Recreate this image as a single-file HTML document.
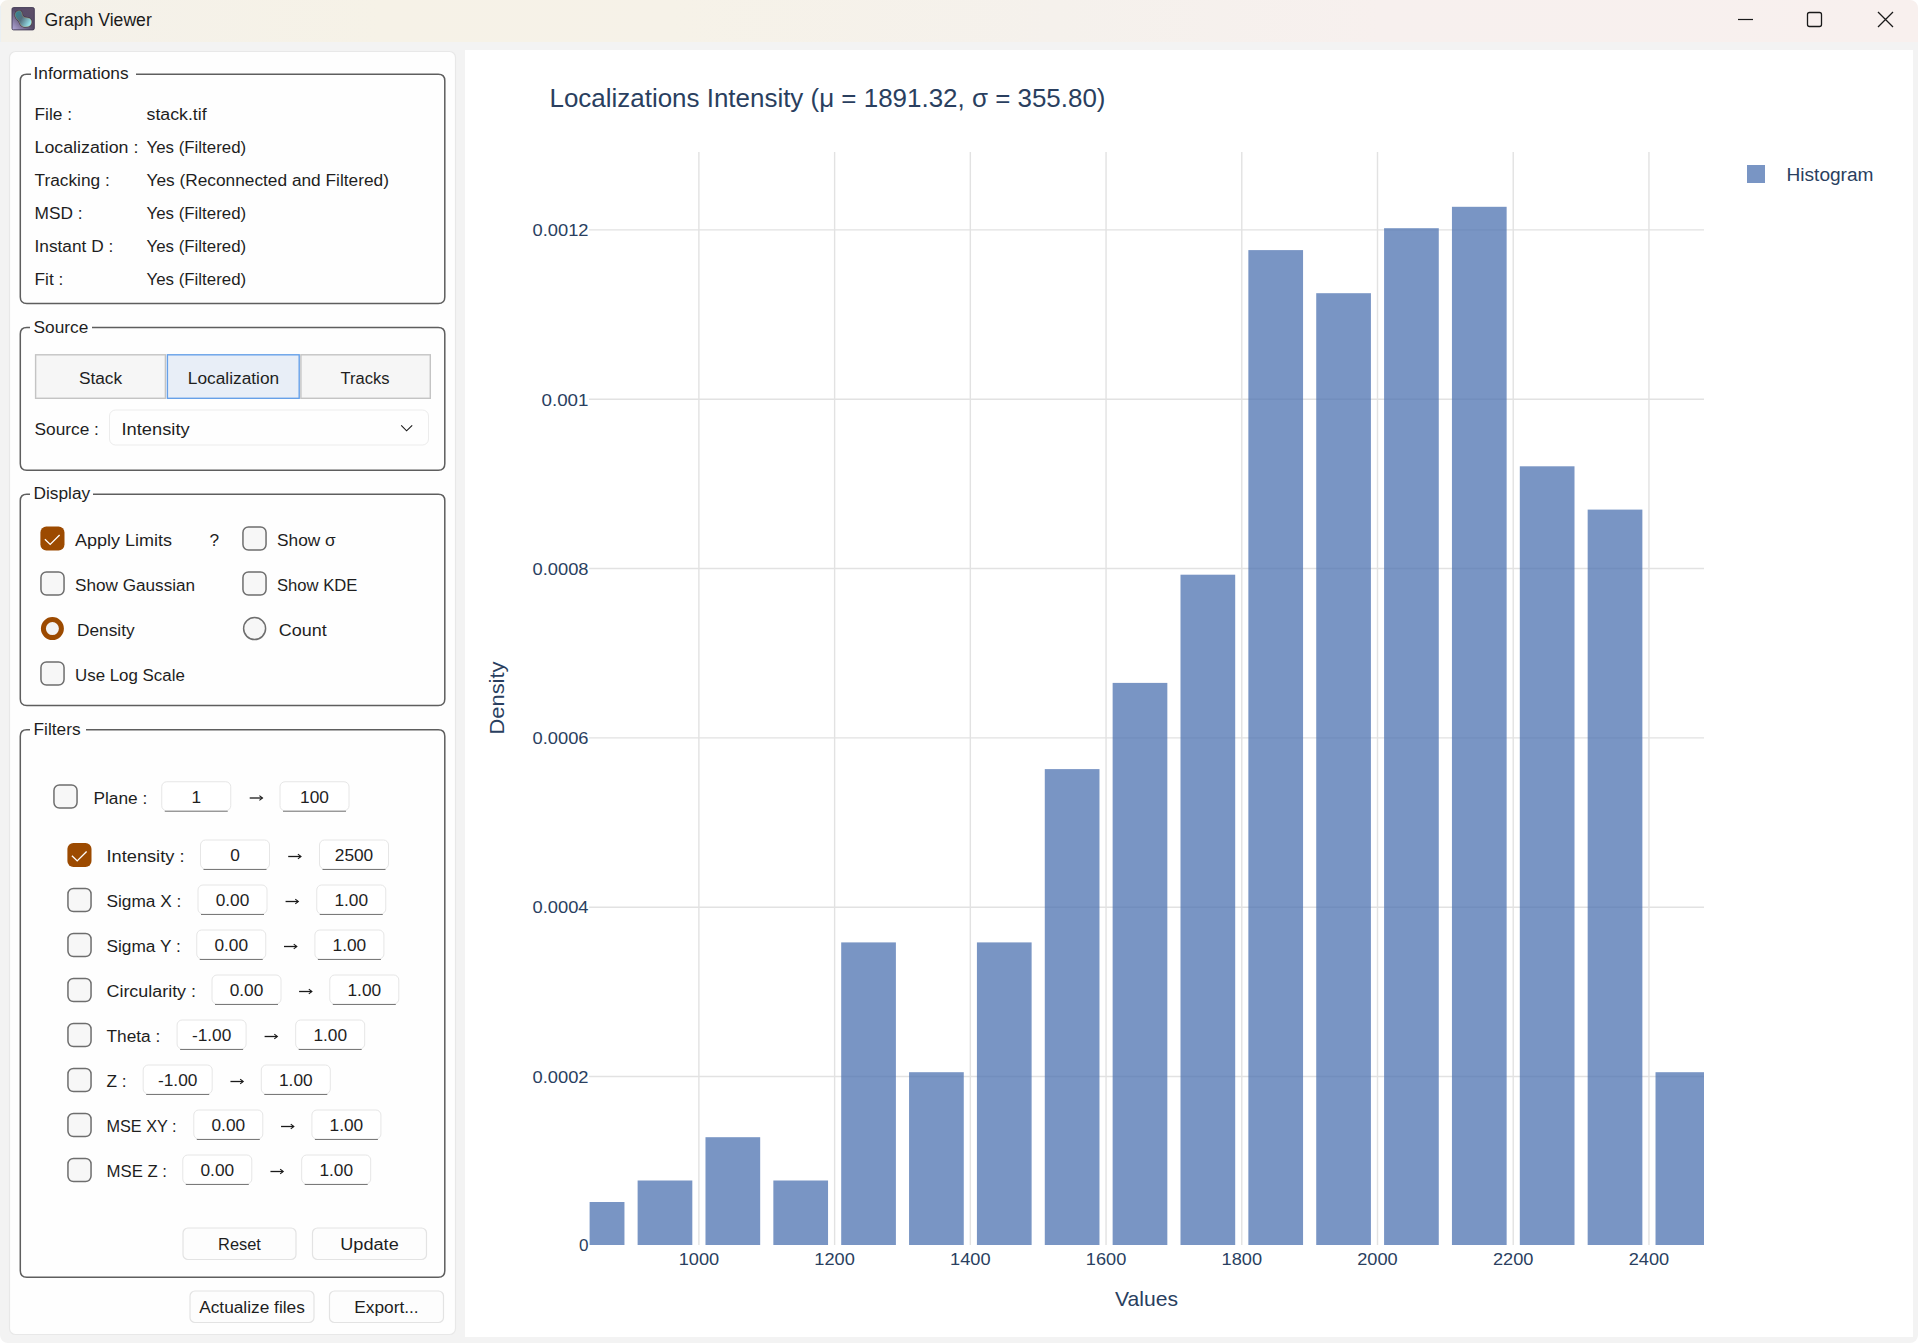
<!DOCTYPE html><html><head><meta charset="utf-8"><style>html,body{margin:0;padding:0;background:#f3f3f3;overflow:hidden}svg{display:block}</style></head><body>
<svg width="1918" height="1343" viewBox="0 0 1918 1343" font-family='"Liberation Sans", sans-serif'>
<defs><linearGradient id="tb" x1="0" x2="1" y1="0" y2="0"><stop offset="0" stop-color="#f4f1ea"/><stop offset="0.2" stop-color="#f6f2e7"/><stop offset="0.35" stop-color="#f6f2e8"/><stop offset="0.55" stop-color="#f5f1ec"/><stop offset="0.72" stop-color="#f7f0ee"/><stop offset="1" stop-color="#f8f0ee"/></linearGradient><linearGradient id="ic" x1="1" y1="0" x2="0" y2="1"><stop offset="0" stop-color="#5e4f68"/><stop offset="0.5" stop-color="#574c6a"/><stop offset="1" stop-color="#b5abdc"/></linearGradient><linearGradient id="ic2" x1="0" y1="0" x2="1" y2="0.6"><stop offset="0" stop-color="#2e8a98"/><stop offset="0.5" stop-color="#55707e"/><stop offset="1" stop-color="#95e0e8"/></linearGradient></defs>
<rect width="1918" height="1343" fill="#f3f3f3"/>
<rect width="1918" height="42" fill="url(#tb)"/>
<rect x="12" y="7.6" width="22.3" height="22.3" rx="1.5" fill="url(#ic)" stroke="#3d3550" stroke-width="0.9"/>
<path d="M19.2,10.7 C21.5,10.5 22,12.5 22.3,14.5 C22.7,16.5 24,17.7 27,17.8 C30.5,17.9 31.8,20 31.6,22.5 C31.3,25.5 29,27 25,27 C21.5,27 20.2,24.5 19.3,22 C18.5,20 16,19 15.2,16 C14.5,13 16.5,10.8 19.2,10.7 Z" fill="url(#ic2)" stroke="#2e2840" stroke-width="1.4"/>
<path d="M19.2,10.7 C21.5,10.5 22,12.5 22.3,14.5 C22.7,16.5 24,17.7 27,17.8 C30.5,17.9 31.8,20 31.6,22.5 C31.3,25.5 29,27 25,27 C21.5,27 20.2,24.5 19.3,22 C18.5,20 16,19 15.2,16 C14.5,13 16.5,10.8 19.2,10.7 Z" fill="url(#ic2)" stroke="#b09a70" stroke-width="0.5"/>
<text x="44.5" y="25.5" font-size="17.6" fill="#1a1a1a" text-anchor="start" >Graph Viewer</text>
<path d="M1738,19.5 L1753,19.5" stroke="#1a1a1a" stroke-width="1.2"/>
<rect x="1807.5" y="12.5" width="14" height="14" rx="2" fill="none" stroke="#1a1a1a" stroke-width="1.3"/>
<path d="M1878,12 L1893,27 M1893,12 L1878,27" stroke="#1a1a1a" stroke-width="1.3"/>
<rect x="9.5" y="51.5" width="446" height="1283" rx="6" fill="#fefefe" stroke="#e8e8e8" stroke-width="1.2"/>
<rect x="465" y="50" width="1448" height="1287" fill="#ffffff"/>
<path d="M31,74.2 L26.8,74.2 Q20.3,74.2 20.3,80.7 L20.3,297.1 Q20.3,303.6 26.8,303.6 L438.3,303.6 Q444.8,303.6 444.8,297.1 L444.8,80.7 Q444.8,74.2 438.3,74.2 L136,74.2" fill="none" stroke="#5e5e5e" stroke-width="1.5"/>
<text x="33.5" y="79" font-size="17.3" fill="#1e1e1e" text-anchor="start" >Informations</text>
<text x="34.5" y="119.75" font-size="17.3" fill="#1e1e1e" text-anchor="start" >File :</text>
<text x="146.5" y="119.75" font-size="17.3" fill="#1e1e1e" text-anchor="start"  textLength="60.18" lengthAdjust="spacingAndGlyphs">stack.tif</text>
<text x="34.5" y="152.75" font-size="17.3" fill="#1e1e1e" text-anchor="start"  textLength="103.88" lengthAdjust="spacingAndGlyphs">Localization :</text>
<text x="146.5" y="152.75" font-size="17.3" fill="#1e1e1e" text-anchor="start"  textLength="99.64" lengthAdjust="spacingAndGlyphs">Yes (Filtered)</text>
<text x="34.5" y="185.75" font-size="17.3" fill="#1e1e1e" text-anchor="start" >Tracking :</text>
<text x="146.5" y="185.75" font-size="17.3" fill="#1e1e1e" text-anchor="start" >Yes (Reconnected and Filtered)</text>
<text x="34.5" y="218.75" font-size="17.3" fill="#1e1e1e" text-anchor="start" >MSD :</text>
<text x="146.5" y="218.75" font-size="17.3" fill="#1e1e1e" text-anchor="start"  textLength="99.64" lengthAdjust="spacingAndGlyphs">Yes (Filtered)</text>
<text x="34.5" y="251.75" font-size="17.3" fill="#1e1e1e" text-anchor="start" >Instant D :</text>
<text x="146.5" y="251.75" font-size="17.3" fill="#1e1e1e" text-anchor="start"  textLength="99.64" lengthAdjust="spacingAndGlyphs">Yes (Filtered)</text>
<text x="34.5" y="284.75" font-size="17.3" fill="#1e1e1e" text-anchor="start" >Fit :</text>
<text x="146.5" y="284.75" font-size="17.3" fill="#1e1e1e" text-anchor="start"  textLength="99.64" lengthAdjust="spacingAndGlyphs">Yes (Filtered)</text>
<path d="M30,327.6 L26.8,327.6 Q20.3,327.6 20.3,334.1 L20.3,463.8 Q20.3,470.3 26.8,470.3 L438.3,470.3 Q444.8,470.3 444.8,463.8 L444.8,334.1 Q444.8,327.6 438.3,327.6 L92,327.6" fill="none" stroke="#5e5e5e" stroke-width="1.5"/>
<text x="33.5" y="332.5" font-size="17.3" fill="#1e1e1e" text-anchor="start" >Source</text>
<rect x="35.6" y="354.8" width="129.8" height="43.5" fill="#f6f6f6" stroke="#c4c4c4" stroke-width="1.4"/>
<rect x="300.9" y="354.8" width="129.4" height="43.5" fill="#f6f6f6" stroke="#c4c4c4" stroke-width="1.4"/>
<rect x="167.4" y="354.8" width="131.8" height="43.5" fill="#e8eef7" stroke="#66a0e8" stroke-width="1.4"/>
<text x="100.5" y="384" font-size="17.3" fill="#1e1e1e" text-anchor="middle" >Stack</text>
<text x="233.5" y="384" font-size="17.3" fill="#1e1e1e" text-anchor="middle" >Localization</text>
<text x="365" y="384" font-size="17.3" fill="#1e1e1e" text-anchor="middle"  textLength="49.0" lengthAdjust="spacingAndGlyphs">Tracks</text>
<text x="34.5" y="435" font-size="17.3" fill="#1e1e1e" text-anchor="start" >Source :</text>
<rect x="109.5" y="410" width="319" height="35" rx="6" fill="#fefefe" stroke="#ececec" stroke-width="1"/>
<text x="121.5" y="435" font-size="17.3" fill="#1e1e1e" text-anchor="start"  textLength="68.16" lengthAdjust="spacingAndGlyphs">Intensity</text>
<path d="M401.2,425.3 L406.6,430.8 L412.2,425.3" fill="none" stroke="#1a1a1a" stroke-width="1.15"/>
<path d="M30,494.2 L26.8,494.2 Q20.3,494.2 20.3,500.7 L20.3,699.1 Q20.3,705.6 26.8,705.6 L438.3,705.6 Q444.8,705.6 444.8,699.1 L444.8,500.7 Q444.8,494.2 438.3,494.2 L93,494.2" fill="none" stroke="#5e5e5e" stroke-width="1.5"/>
<text x="33.5" y="499" font-size="17.3" fill="#1e1e1e" text-anchor="start" >Display</text>
<rect x="40.4" y="526.4" width="24.1" height="24.2" rx="6" fill="#9c4a00"/>
<path d="M44.9,539.3 L50.2,544.4 L59.6,535.0" fill="none" stroke="#fff" stroke-width="1.3"/>
<text x="75" y="545.5" font-size="17.3" fill="#1e1e1e" text-anchor="start"  textLength="97.07" lengthAdjust="spacingAndGlyphs">Apply Limits</text>
<text x="209.5" y="545.5" font-size="17.3" fill="#1e1e1e" text-anchor="start" >?</text>
<rect x="242.95" y="526.95" width="23.1" height="23.1" rx="5.5" fill="#f7f7f7" stroke="#6e6e6e" stroke-width="1.5"/>
<text x="277" y="545.5" font-size="17.3" fill="#1e1e1e" text-anchor="start" >Show σ</text>
<rect x="40.95" y="571.95" width="23.1" height="23.1" rx="5.5" fill="#f7f7f7" stroke="#6e6e6e" stroke-width="1.5"/>
<text x="75" y="590.5" font-size="17.3" fill="#1e1e1e" text-anchor="start"  textLength="120.15" lengthAdjust="spacingAndGlyphs">Show Gaussian</text>
<rect x="242.95" y="571.95" width="23.1" height="23.1" rx="5.5" fill="#f7f7f7" stroke="#6e6e6e" stroke-width="1.5"/>
<text x="277" y="590.5" font-size="17.3" fill="#1e1e1e" text-anchor="start"  textLength="80.38" lengthAdjust="spacingAndGlyphs">Show KDE</text>
<circle cx="52.4" cy="628.6" r="9" fill="#f3f3f3" stroke="#9c4a00" stroke-width="5"/>
<text x="77" y="635.5" font-size="17.3" fill="#1e1e1e" text-anchor="start" >Density</text>
<circle cx="254.6" cy="628.6" r="11" fill="#f7f7f7" stroke="#6e6e6e" stroke-width="1.5"/>
<text x="278.8" y="635.5" font-size="17.3" fill="#1e1e1e" text-anchor="start"  textLength="48.02" lengthAdjust="spacingAndGlyphs">Count</text>
<rect x="40.95" y="661.95" width="23.1" height="23.1" rx="5.5" fill="#f7f7f7" stroke="#6e6e6e" stroke-width="1.5"/>
<text x="75" y="680.5" font-size="17.3" fill="#1e1e1e" text-anchor="start"  textLength="109.81" lengthAdjust="spacingAndGlyphs">Use Log Scale</text>
<path d="M30,729.7 L26.8,729.7 Q20.3,729.7 20.3,736.2 L20.3,1270.7 Q20.3,1277.2 26.8,1277.2 L438.3,1277.2 Q444.8,1277.2 444.8,1270.7 L444.8,736.2 Q444.8,729.7 438.3,729.7 L86,729.7" fill="none" stroke="#5e5e5e" stroke-width="1.5"/>
<text x="33.5" y="734.5" font-size="17.3" fill="#1e1e1e" text-anchor="start" >Filters</text>
<rect x="53.95" y="784.95" width="23.1" height="23.1" rx="5.5" fill="#f7f7f7" stroke="#6e6e6e" stroke-width="1.5"/>
<text x="93.5" y="803.75" font-size="17.3" fill="#1e1e1e" text-anchor="start" >Plane :</text>
<rect x="161.75" y="781.75" width="69" height="29" rx="5" fill="#fff" stroke="#e6e6e6" stroke-width="1"/>
<path d="M164.75,811.25 L227.75,811.25" stroke="#7a7a7a" stroke-width="1.05"/>
<text x="196.25" y="802.75" font-size="17.3" fill="#1e1e1e" text-anchor="middle" >1</text>
<path d="M249.7,798 L262.2,798" stroke="#1a1a1a" stroke-width="1.3"/>
<path d="M259.4,795.6 L262.5,798 L259.4,800.4" fill="none" stroke="#1a1a1a" stroke-width="1.1"/>
<rect x="280.0" y="781.75" width="69" height="29" rx="5" fill="#fff" stroke="#e6e6e6" stroke-width="1"/>
<path d="M283.0,811.25 L346.0,811.25" stroke="#7a7a7a" stroke-width="1.05"/>
<text x="314.5" y="802.75" font-size="17.3" fill="#1e1e1e" text-anchor="middle" >100</text>
<rect x="67.4" y="842.9" width="24.1" height="24.2" rx="6" fill="#9c4a00"/>
<path d="M71.9,855.8 L77.2,860.9 L86.6,851.5" fill="none" stroke="#fff" stroke-width="1.3"/>
<text x="106.5" y="862" font-size="17.3" fill="#1e1e1e" text-anchor="start"  textLength="77.97" lengthAdjust="spacingAndGlyphs">Intensity :</text>
<rect x="200.5" y="840.0" width="69" height="29" rx="5" fill="#fff" stroke="#e6e6e6" stroke-width="1"/>
<path d="M203.5,869.5 L266.5,869.5" stroke="#7a7a7a" stroke-width="1.05"/>
<text x="235.0" y="861.0" font-size="17.3" fill="#1e1e1e" text-anchor="middle" >0</text>
<path d="M288.2,856.5 L300.7,856.5" stroke="#1a1a1a" stroke-width="1.3"/>
<path d="M297.9,854.1 L301.0,856.5 L297.9,858.9" fill="none" stroke="#1a1a1a" stroke-width="1.1"/>
<rect x="319.5" y="840.0" width="69" height="29" rx="5" fill="#fff" stroke="#e6e6e6" stroke-width="1"/>
<path d="M322.5,869.5 L385.5,869.5" stroke="#7a7a7a" stroke-width="1.05"/>
<text x="354.0" y="861.0" font-size="17.3" fill="#1e1e1e" text-anchor="middle" >2500</text>
<rect x="67.95" y="888.45" width="23.1" height="23.1" rx="5.5" fill="#f7f7f7" stroke="#6e6e6e" stroke-width="1.5"/>
<text x="106.5" y="907" font-size="17.3" fill="#1e1e1e" text-anchor="start" >Sigma X :</text>
<rect x="198.0" y="885.0" width="69" height="29" rx="5" fill="#fff" stroke="#e6e6e6" stroke-width="1"/>
<path d="M201.0,914.5 L264.0,914.5" stroke="#7a7a7a" stroke-width="1.05"/>
<text x="232.5" y="906.0" font-size="17.3" fill="#1e1e1e" text-anchor="middle" >0.00</text>
<path d="M285.575,901.5 L298.075,901.5" stroke="#1a1a1a" stroke-width="1.3"/>
<path d="M295.275,899.1 L298.375,901.5 L295.275,903.9" fill="none" stroke="#1a1a1a" stroke-width="1.1"/>
<rect x="316.75" y="885.0" width="69" height="29" rx="5" fill="#fff" stroke="#e6e6e6" stroke-width="1"/>
<path d="M319.75,914.5 L382.75,914.5" stroke="#7a7a7a" stroke-width="1.05"/>
<text x="351.25" y="906.0" font-size="17.3" fill="#1e1e1e" text-anchor="middle" >1.00</text>
<rect x="67.95" y="933.45" width="23.1" height="23.1" rx="5.5" fill="#f7f7f7" stroke="#6e6e6e" stroke-width="1.5"/>
<text x="106.5" y="952" font-size="17.3" fill="#1e1e1e" text-anchor="start" >Sigma Y :</text>
<rect x="196.75" y="930.0" width="69" height="29" rx="5" fill="#fff" stroke="#e6e6e6" stroke-width="1"/>
<path d="M199.75,959.5 L262.75,959.5" stroke="#7a7a7a" stroke-width="1.05"/>
<text x="231.25" y="951.0" font-size="17.3" fill="#1e1e1e" text-anchor="middle" >0.00</text>
<path d="M284.025,946.5 L296.525,946.5" stroke="#1a1a1a" stroke-width="1.3"/>
<path d="M293.72499999999997,944.1 L296.825,946.5 L293.72499999999997,948.9" fill="none" stroke="#1a1a1a" stroke-width="1.1"/>
<rect x="314.9" y="930.0" width="69" height="29" rx="5" fill="#fff" stroke="#e6e6e6" stroke-width="1"/>
<path d="M317.9,959.5 L380.9,959.5" stroke="#7a7a7a" stroke-width="1.05"/>
<text x="349.4" y="951.0" font-size="17.3" fill="#1e1e1e" text-anchor="middle" >1.00</text>
<rect x="67.95" y="978.45" width="23.1" height="23.1" rx="5.5" fill="#f7f7f7" stroke="#6e6e6e" stroke-width="1.5"/>
<text x="106.5" y="997" font-size="17.3" fill="#1e1e1e" text-anchor="start"  textLength="89.52" lengthAdjust="spacingAndGlyphs">Circularity :</text>
<rect x="212.0" y="975.0" width="69" height="29" rx="5" fill="#fff" stroke="#e6e6e6" stroke-width="1"/>
<path d="M215.0,1004.5 L278.0,1004.5" stroke="#7a7a7a" stroke-width="1.05"/>
<text x="246.5" y="996.0" font-size="17.3" fill="#1e1e1e" text-anchor="middle" >0.00</text>
<path d="M299.09999999999997,991.5 L311.59999999999997,991.5" stroke="#1a1a1a" stroke-width="1.3"/>
<path d="M308.79999999999995,989.1 L311.9,991.5 L308.79999999999995,993.9" fill="none" stroke="#1a1a1a" stroke-width="1.1"/>
<rect x="329.8" y="975.0" width="69" height="29" rx="5" fill="#fff" stroke="#e6e6e6" stroke-width="1"/>
<path d="M332.8,1004.5 L395.8,1004.5" stroke="#7a7a7a" stroke-width="1.05"/>
<text x="364.3" y="996.0" font-size="17.3" fill="#1e1e1e" text-anchor="middle" >1.00</text>
<rect x="67.95" y="1023.45" width="23.1" height="23.1" rx="5.5" fill="#f7f7f7" stroke="#6e6e6e" stroke-width="1.5"/>
<text x="106.5" y="1042" font-size="17.3" fill="#1e1e1e" text-anchor="start" >Theta :</text>
<rect x="177.1" y="1020.0" width="69" height="29" rx="5" fill="#fff" stroke="#e6e6e6" stroke-width="1"/>
<path d="M180.1,1049.5 L243.1,1049.5" stroke="#7a7a7a" stroke-width="1.05"/>
<text x="211.6" y="1041.0" font-size="17.3" fill="#1e1e1e" text-anchor="middle" >-1.00</text>
<path d="M264.59999999999997,1036.5 L277.09999999999997,1036.5" stroke="#1a1a1a" stroke-width="1.3"/>
<path d="M274.29999999999995,1034.1 L277.4,1036.5 L274.29999999999995,1038.9" fill="none" stroke="#1a1a1a" stroke-width="1.1"/>
<rect x="295.7" y="1020.0" width="69" height="29" rx="5" fill="#fff" stroke="#e6e6e6" stroke-width="1"/>
<path d="M298.7,1049.5 L361.7,1049.5" stroke="#7a7a7a" stroke-width="1.05"/>
<text x="330.2" y="1041.0" font-size="17.3" fill="#1e1e1e" text-anchor="middle" >1.00</text>
<rect x="67.95" y="1068.45" width="23.1" height="23.1" rx="5.5" fill="#f7f7f7" stroke="#6e6e6e" stroke-width="1.5"/>
<text x="106.5" y="1087" font-size="17.3" fill="#1e1e1e" text-anchor="start" >Z :</text>
<rect x="143.2" y="1065.0" width="69" height="29" rx="5" fill="#fff" stroke="#e6e6e6" stroke-width="1"/>
<path d="M146.2,1094.5 L209.2,1094.5" stroke="#7a7a7a" stroke-width="1.05"/>
<text x="177.7" y="1086.0" font-size="17.3" fill="#1e1e1e" text-anchor="middle" >-1.00</text>
<path d="M230.45,1081.5 L242.95,1081.5" stroke="#1a1a1a" stroke-width="1.3"/>
<path d="M240.15,1079.1 L243.25,1081.5 L240.15,1083.9" fill="none" stroke="#1a1a1a" stroke-width="1.1"/>
<rect x="261.3" y="1065.0" width="69" height="29" rx="5" fill="#fff" stroke="#e6e6e6" stroke-width="1"/>
<path d="M264.3,1094.5 L327.3,1094.5" stroke="#7a7a7a" stroke-width="1.05"/>
<text x="295.8" y="1086.0" font-size="17.3" fill="#1e1e1e" text-anchor="middle" >1.00</text>
<rect x="67.95" y="1113.45" width="23.1" height="23.1" rx="5.5" fill="#f7f7f7" stroke="#6e6e6e" stroke-width="1.5"/>
<text x="106.5" y="1132" font-size="17.3" fill="#1e1e1e" text-anchor="start"  textLength="70.09" lengthAdjust="spacingAndGlyphs">MSE XY :</text>
<rect x="193.8" y="1110.0" width="69" height="29" rx="5" fill="#fff" stroke="#e6e6e6" stroke-width="1"/>
<path d="M196.8,1139.5 L259.8,1139.5" stroke="#7a7a7a" stroke-width="1.05"/>
<text x="228.3" y="1131.0" font-size="17.3" fill="#1e1e1e" text-anchor="middle" >0.00</text>
<path d="M281.05,1126.5 L293.55,1126.5" stroke="#1a1a1a" stroke-width="1.3"/>
<path d="M290.75,1124.1 L293.85,1126.5 L290.75,1128.9" fill="none" stroke="#1a1a1a" stroke-width="1.1"/>
<rect x="311.9" y="1110.0" width="69" height="29" rx="5" fill="#fff" stroke="#e6e6e6" stroke-width="1"/>
<path d="M314.9,1139.5 L377.9,1139.5" stroke="#7a7a7a" stroke-width="1.05"/>
<text x="346.4" y="1131.0" font-size="17.3" fill="#1e1e1e" text-anchor="middle" >1.00</text>
<rect x="67.95" y="1158.45" width="23.1" height="23.1" rx="5.5" fill="#f7f7f7" stroke="#6e6e6e" stroke-width="1.5"/>
<text x="106.5" y="1177" font-size="17.3" fill="#1e1e1e" text-anchor="start"  textLength="60.52" lengthAdjust="spacingAndGlyphs">MSE Z :</text>
<rect x="182.8" y="1155.0" width="69" height="29" rx="5" fill="#fff" stroke="#e6e6e6" stroke-width="1"/>
<path d="M185.8,1184.5 L248.8,1184.5" stroke="#7a7a7a" stroke-width="1.05"/>
<text x="217.3" y="1176.0" font-size="17.3" fill="#1e1e1e" text-anchor="middle" >0.00</text>
<path d="M270.45,1171.5 L282.95,1171.5" stroke="#1a1a1a" stroke-width="1.3"/>
<path d="M280.15,1169.1 L283.25,1171.5 L280.15,1173.9" fill="none" stroke="#1a1a1a" stroke-width="1.1"/>
<rect x="301.7" y="1155.0" width="69" height="29" rx="5" fill="#fff" stroke="#e6e6e6" stroke-width="1"/>
<path d="M304.7,1184.5 L367.7,1184.5" stroke="#7a7a7a" stroke-width="1.05"/>
<text x="336.2" y="1176.0" font-size="17.3" fill="#1e1e1e" text-anchor="middle" >1.00</text>
<rect x="183.0" y="1228.0" width="113" height="31.5" rx="5" fill="#fdfdfd" stroke="#e3e3e3" stroke-width="1.2"/>
<text x="239.5" y="1250.25" font-size="17.3" fill="#1e1e1e" text-anchor="middle"  textLength="42.86" lengthAdjust="spacingAndGlyphs">Reset</text>
<rect x="312.5" y="1228.0" width="114" height="31.5" rx="5" fill="#fdfdfd" stroke="#e3e3e3" stroke-width="1.2"/>
<text x="369.5" y="1250.25" font-size="17.3" fill="#1e1e1e" text-anchor="middle"  textLength="58.43" lengthAdjust="spacingAndGlyphs">Update</text>
<rect x="190.0" y="1291.0" width="124" height="31.5" rx="5" fill="#fdfdfd" stroke="#e3e3e3" stroke-width="1.2"/>
<text x="252.0" y="1313.25" font-size="17.3" fill="#1e1e1e" text-anchor="middle" >Actualize files</text>
<rect x="329.5" y="1291.0" width="114" height="31.5" rx="5" fill="#fdfdfd" stroke="#e3e3e3" stroke-width="1.2"/>
<text x="386.5" y="1313.25" font-size="17.3" fill="#1e1e1e" text-anchor="middle" >Export...</text>
<g stroke="#e2e2e2" stroke-width="1.4">
<line x1="698.90" y1="152" x2="698.90" y2="1245.0"/>
<line x1="834.62" y1="152" x2="834.62" y2="1245.0"/>
<line x1="970.34" y1="152" x2="970.34" y2="1245.0"/>
<line x1="1106.06" y1="152" x2="1106.06" y2="1245.0"/>
<line x1="1241.78" y1="152" x2="1241.78" y2="1245.0"/>
<line x1="1377.50" y1="152" x2="1377.50" y2="1245.0"/>
<line x1="1513.22" y1="152" x2="1513.22" y2="1245.0"/>
<line x1="1648.94" y1="152" x2="1648.94" y2="1245.0"/>
<line x1="589" y1="1076.50" x2="1704" y2="1076.50"/>
<line x1="589" y1="907.18" x2="1704" y2="907.18"/>
<line x1="589" y1="737.86" x2="1704" y2="737.86"/>
<line x1="589" y1="568.54" x2="1704" y2="568.54"/>
<line x1="589" y1="399.22" x2="1704" y2="399.22"/>
<line x1="589" y1="229.90" x2="1704" y2="229.90"/>
</g>
<g fill="#4c72b0" fill-opacity="0.75">
<rect x="589.60" y="1202" width="34.86" height="43.00"/>
<rect x="637.62" y="1180.5" width="54.70" height="64.50"/>
<rect x="705.48" y="1137.2" width="54.70" height="107.80"/>
<rect x="773.34" y="1180.5" width="54.70" height="64.50"/>
<rect x="841.20" y="942.4" width="54.70" height="302.60"/>
<rect x="909.06" y="1072.2" width="54.70" height="172.80"/>
<rect x="976.92" y="942.4" width="54.70" height="302.60"/>
<rect x="1044.78" y="769.1" width="54.70" height="475.90"/>
<rect x="1112.64" y="682.9" width="54.70" height="562.10"/>
<rect x="1180.50" y="574.7" width="54.70" height="670.30"/>
<rect x="1248.36" y="250.1" width="54.70" height="994.90"/>
<rect x="1316.22" y="293.2" width="54.70" height="951.80"/>
<rect x="1384.08" y="228.2" width="54.70" height="1016.80"/>
<rect x="1451.94" y="206.8" width="54.70" height="1038.20"/>
<rect x="1519.80" y="466.3" width="54.70" height="778.70"/>
<rect x="1587.66" y="509.6" width="54.70" height="735.40"/>
<rect x="1655.52" y="1072.2" width="48.48" height="172.80"/>
</g>
<text x="588.5" y="1251.2" font-size="17" fill="#2a3f5f" text-anchor="end"  textLength="9.5" lengthAdjust="spacingAndGlyphs">0</text>
<text x="588.5" y="1082.8" font-size="17" fill="#2a3f5f" text-anchor="end"  textLength="56" lengthAdjust="spacingAndGlyphs">0.0002</text>
<text x="588.5" y="913.4799999999999" font-size="17" fill="#2a3f5f" text-anchor="end"  textLength="56" lengthAdjust="spacingAndGlyphs">0.0004</text>
<text x="588.5" y="744.1599999999999" font-size="17" fill="#2a3f5f" text-anchor="end"  textLength="56" lengthAdjust="spacingAndGlyphs">0.0006</text>
<text x="588.5" y="574.8399999999999" font-size="17" fill="#2a3f5f" text-anchor="end"  textLength="56" lengthAdjust="spacingAndGlyphs">0.0008</text>
<text x="588.5" y="405.52000000000004" font-size="17" fill="#2a3f5f" text-anchor="end"  textLength="47" lengthAdjust="spacingAndGlyphs">0.001</text>
<text x="588.5" y="236.2" font-size="17" fill="#2a3f5f" text-anchor="end"  textLength="56" lengthAdjust="spacingAndGlyphs">0.0012</text>
<text x="698.9" y="1264.75" font-size="17" fill="#2a3f5f" text-anchor="middle"  textLength="40.5" lengthAdjust="spacingAndGlyphs">1000</text>
<text x="834.62" y="1264.75" font-size="17" fill="#2a3f5f" text-anchor="middle"  textLength="40.5" lengthAdjust="spacingAndGlyphs">1200</text>
<text x="970.3399999999999" y="1264.75" font-size="17" fill="#2a3f5f" text-anchor="middle"  textLength="40.5" lengthAdjust="spacingAndGlyphs">1400</text>
<text x="1106.06" y="1264.75" font-size="17" fill="#2a3f5f" text-anchor="middle"  textLength="40.5" lengthAdjust="spacingAndGlyphs">1600</text>
<text x="1241.78" y="1264.75" font-size="17" fill="#2a3f5f" text-anchor="middle"  textLength="40.5" lengthAdjust="spacingAndGlyphs">1800</text>
<text x="1377.5" y="1264.75" font-size="17" fill="#2a3f5f" text-anchor="middle"  textLength="40.5" lengthAdjust="spacingAndGlyphs">2000</text>
<text x="1513.2199999999998" y="1264.75" font-size="17" fill="#2a3f5f" text-anchor="middle"  textLength="40.5" lengthAdjust="spacingAndGlyphs">2200</text>
<text x="1648.94" y="1264.75" font-size="17" fill="#2a3f5f" text-anchor="middle"  textLength="40.5" lengthAdjust="spacingAndGlyphs">2400</text>
<text x="1146.5" y="1305.6" font-size="19.8" fill="#2a3f5f" text-anchor="middle"  textLength="63" lengthAdjust="spacingAndGlyphs">Values</text>
<text x="0" y="0" font-size="20.5" fill="#2a3f5f" text-anchor="middle" textLength="73" lengthAdjust="spacingAndGlyphs" transform="translate(503.5 698) rotate(-90)">Density</text>
<text x="549.5" y="106.8" font-size="25.8" fill="#2a3f5f" text-anchor="start"  textLength="556" lengthAdjust="spacingAndGlyphs">Localizations Intensity (μ = 1891.32, σ = 355.80)</text>
<rect x="1747" y="165" width="18" height="18" fill="#4c72b0" fill-opacity="0.75"/>
<text x="1786.5" y="181.2" font-size="18" fill="#2a3f5f" text-anchor="start"  textLength="87" lengthAdjust="spacingAndGlyphs">Histogram</text>
<path d="M0,0 L8,0 A8,8 0 0 0 0,8 Z" fill="#ffffff"/>
<path d="M1918,0 L1910,0 A8,8 0 0 1 1918,8 Z" fill="#ffffff"/>
<path d="M0,1343 L8,1343 A8,8 0 0 1 0,1335 Z" fill="#ffffff"/>
<path d="M1918,1343 L1910,1343 A8,8 0 0 0 1918,1335 Z" fill="#ffffff"/>
<rect x="0" y="6" width="1" height="36" fill="#eaf0f4"/>
</svg></body></html>
